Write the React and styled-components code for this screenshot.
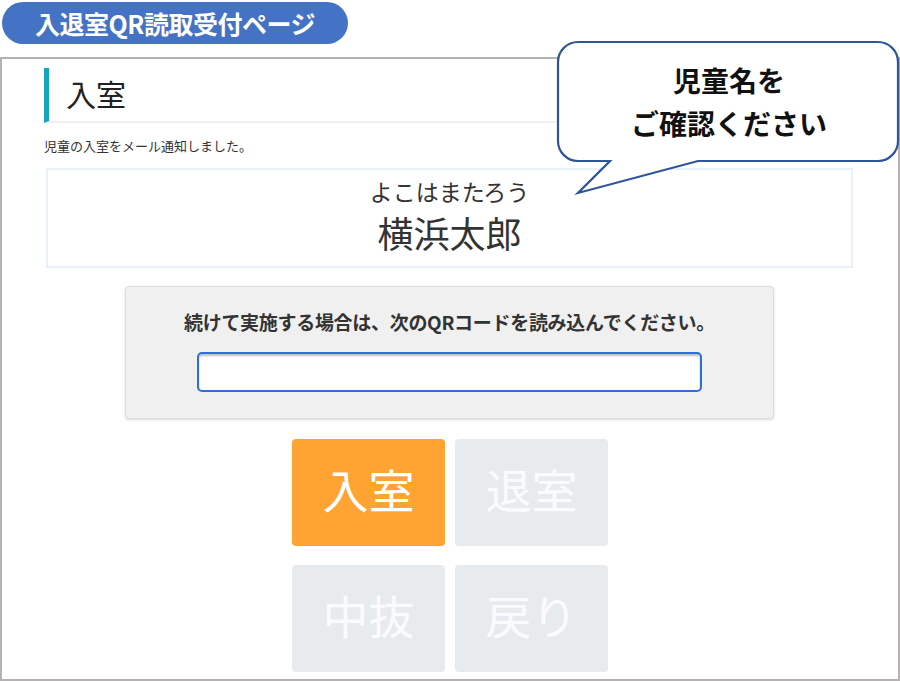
import styled, { createGlobalStyle } from "styled-components";

const GlobalStyle = createGlobalStyle`
  body {
    margin: 0;
    background: #fff;
    font-family: "Noto Sans CJK JP", "Noto Sans", sans-serif;
    color: #333;
  }
`;

const Page = styled.div`
  position: relative;
  width: 900px;
  height: 681px;
  overflow: hidden;
`;

const TitleBadge = styled.div`
  margin: 2px 0 0 2px;
  width: 346px;
  height: 42px;
  border-radius: 21px;
  background: #4472c4;
  color: #fff;
  font-weight: 700;
  font-size: 25px;
  display: flex;
  align-items: center;
  justify-content: center;
  letter-spacing: -0.5px;
`;

const Frame = styled.div`
  margin-top: 13px;
  height: 624px;
  width: 900px;
  box-sizing: border-box;
  border: 2px solid #b4b2b2;
  padding: 9px 43px 0 42px;
  display: flex;
  flex-direction: column;
  align-items: stretch;
`;

const Heading = styled.h1`
  margin: 0;
  height: 53px;
  border-left: 5px solid #16a5c0;
  border-bottom: 2px solid #eef1f4;
  padding: 0 0 3px 17px;
  box-sizing: content-box;
  height: 50px;
  font-size: 30px;
  font-weight: 400;
  color: #222;
  display: flex;
  align-items: center;
`;

const Notice = styled.p`
  margin: 13px 0 0 0;
  font-size: 13px;
  line-height: 20px;
  color: #333;
`;

const NameCard = styled.div`
  margin: 12px 2px 0 2px;
  height: 100px;
  box-sizing: border-box;
  border: 2px solid #e8f1fb;
  display: flex;
  flex-direction: column;
  align-items: center;
  padding-top: 6px;
`;

const Kana = styled.div`
  font-size: 23px;
  line-height: 30px;
  color: #333;
`;

const Kanji = styled.div`
  margin-top: 2px;
  font-size: 36px;
  line-height: 48px;
  color: #333;
`;

const ScanPanel = styled.div`
  margin: 18px auto 0 auto;
  width: 649px;
  height: 133px;
  box-sizing: border-box;
  background: #f0f0f0;
  border: 1px solid #dcdcdc;
  border-radius: 4px;
  box-shadow: 0 1px 3px rgba(0, 0, 0, 0.15);
  display: flex;
  flex-direction: column;
  align-items: center;
  padding-top: 23px;
`;

const ScanText = styled.div`
  font-size: 19px;
  font-weight: 700;
  line-height: 24px;
  color: #333;
  letter-spacing: -0.3px;
`;

const ScanInput = styled.input`
  margin-top: 18px;
  width: 505px;
  height: 40px;
  box-sizing: border-box;
  border: 2px solid #2a6fdb;
  border-radius: 5px;
  background: #fff;
  box-shadow: inset 0 2px 2px rgba(0, 0, 0, 0.25);
  outline: none;
`;

const ButtonGrid = styled.div`
  margin: 20px auto 0 auto;
  display: grid;
  grid-template-columns: 153px 153px;
  grid-auto-rows: 107px;
  column-gap: 10px;
  row-gap: 19px;
  padding-left: 1px;
`;

const ModeButton = styled.button`
  border: none;
  border-radius: 4px;
  background: ${(p) => (p.$active ? "#ffa333" : "#e8ebee")};
  color: ${(p) => (p.$active ? "#fff" : "#fbfbfb")};
  font-family: "Noto Sans CJK JP", sans-serif;
  font-size: 46px;
  font-weight: 400;
  display: flex;
  align-items: center;
  justify-content: center;
  padding: 0 0 10px 0;
  cursor: pointer;
`;

const Callout = styled.div`
  position: absolute;
  left: 556px;
  top: 40px;
  width: 344px;
  height: 156px;
`;

const CalloutShape = styled.svg`
  position: absolute;
  left: 0;
  top: 0;
`;

const CalloutText = styled.div`
  position: relative;
  height: 123px;
  display: flex;
  flex-direction: column;
  align-items: center;
  justify-content: center;
  font-size: 28px;
  font-weight: 700;
  line-height: 43px;
  color: #111;
  padding-left: 2px;
`;

const modes = [
  { label: "入室", active: true },
  { label: "退室" },
  { label: "中抜" },
  { label: "戻り" },
];

export default function App() {
  return (
    <Page>
      <GlobalStyle />
      <TitleBadge>入退室QR読取受付ページ</TitleBadge>
      <Frame>
        <Heading>入室</Heading>
        <Notice>児童の入室をメール通知しました。</Notice>
        <NameCard>
          <Kana>よこはまたろう</Kana>
          <Kanji>横浜太郎</Kanji>
        </NameCard>
        <ScanPanel>
          <ScanText>続けて実施する場合は、次のQRコードを読み込んでください。</ScanText>
          <ScanInput type="text" />
        </ScanPanel>
        <ButtonGrid>
          {modes.map((m) => (
            <ModeButton key={m.label} $active={m.active}>
              {m.label}
            </ModeButton>
          ))}
        </ButtonGrid>
      </Frame>
      <Callout>
        <CalloutShape width="344" height="156" viewBox="0 0 344 156">
          <path
            d="M22 2 H322 A20 20 0 0 1 342 22 V101 A20 20 0 0 1 322 121 H142 L22 153 L54 121 H22 A20 20 0 0 1 2 101 V22 A20 20 0 0 1 22 2 Z"
            fill="#fff"
            stroke="#2f5597"
            strokeWidth="2.2"
            strokeLinejoin="miter"
          />
        </CalloutShape>
        <CalloutText>
          <span>児童名を</span>
          <span>ご確認ください</span>
        </CalloutText>
      </Callout>
    </Page>
  );
}
